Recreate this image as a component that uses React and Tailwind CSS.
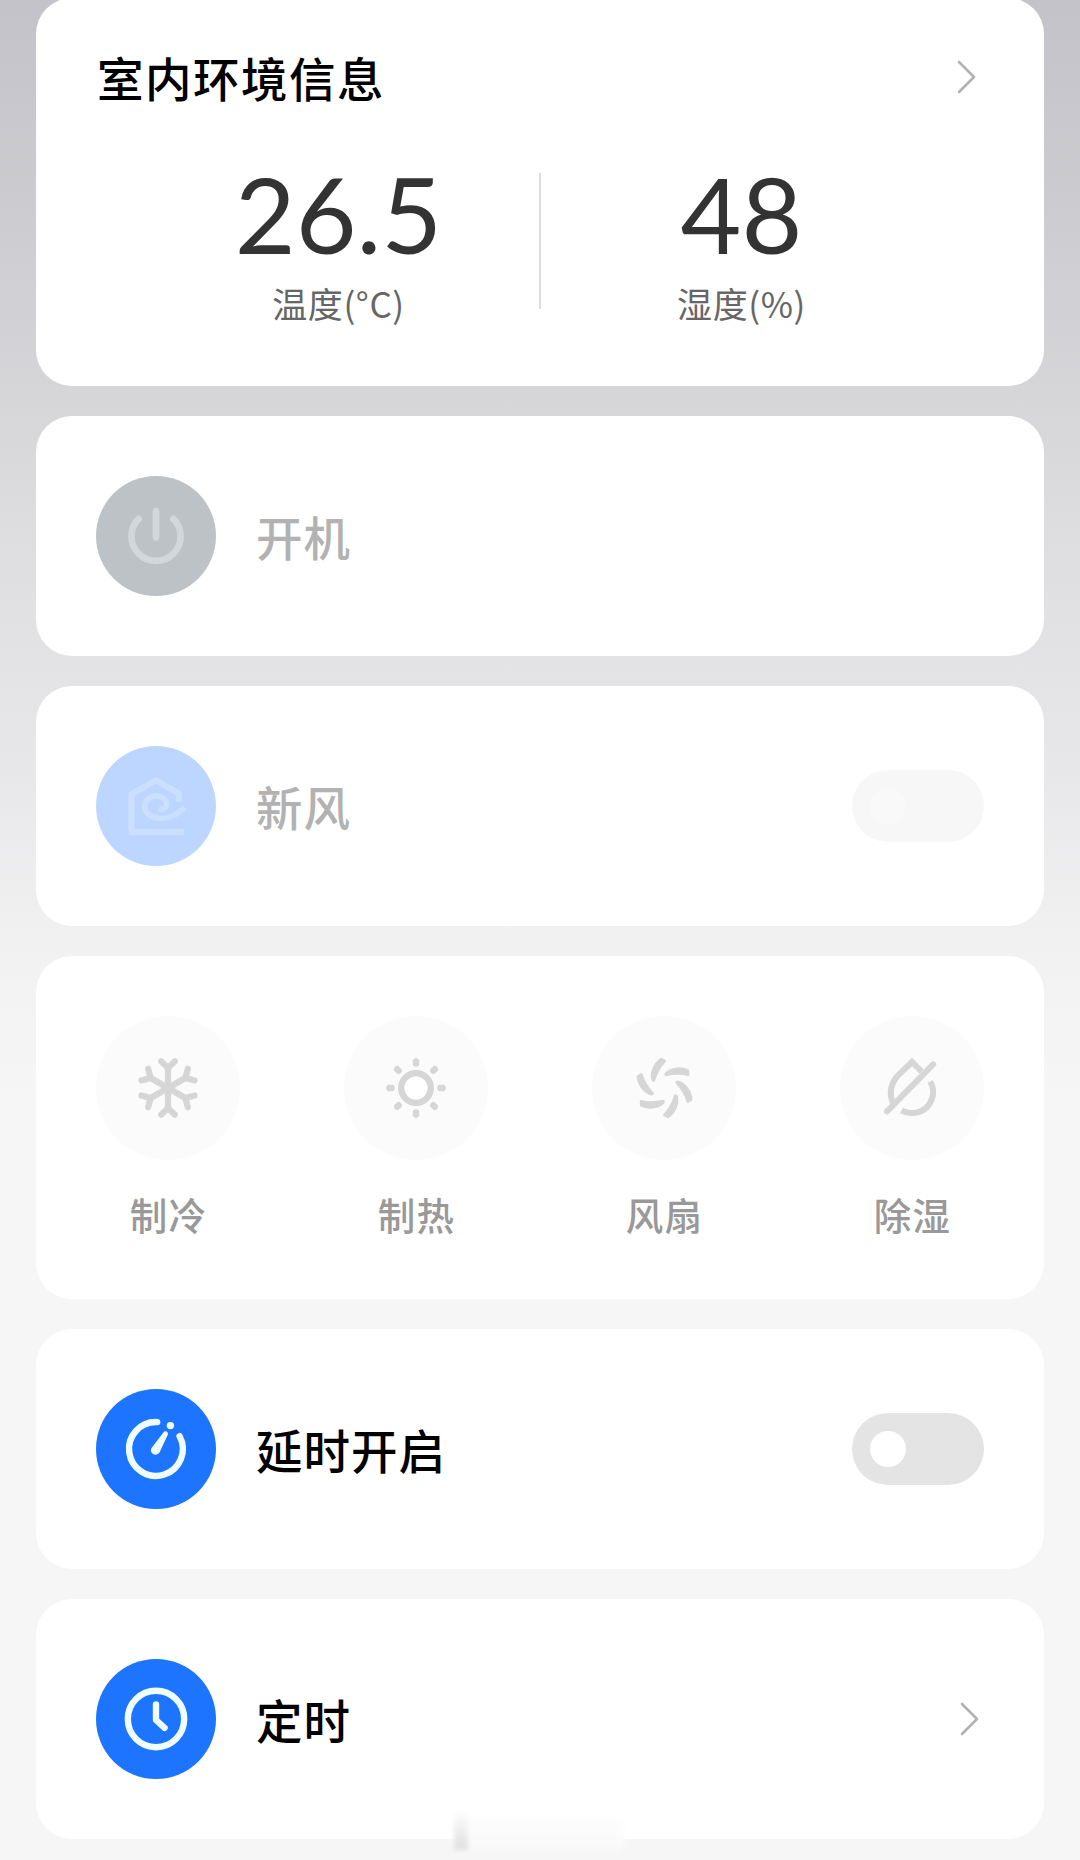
function Chevron({ className }) {
  return (
    <svg className={className} width="24" height="40" viewBox="0 0 24 40" fill="none" stroke="#b2b2b2" strokeWidth="2.6" strokeLinecap="round" strokeLinejoin="round">
      <path d="M4 5L19 20L4 35" />
    </svg>
  );
}

function PowerIcon() {
  return (
    <svg viewBox="0 0 120 120" className="size-full" fill="none" stroke="#d1d7da" strokeWidth="6.6" strokeLinecap="round">
      <path d="M42.8 42.7A24.6 24.6 0 1 0 77.2 42.7" />
      <path d="M60 35V61.5" />
    </svg>
  );
}

function FreshAirIcon() {
  return (
    <svg viewBox="0 0 120 120" className="size-full" fill="none" stroke="#cbdfff" strokeWidth="6.2" strokeLinejoin="round">
      <path d="M88 86.2H35.4V48.3L60 34.4L83 47.6V56" />
      <path d="M89 61.5C81 68 74 73 65 72.4C55 72 48.8 67 48.8 60.5C48.8 54 54 50 60 50C67 50 71 54 70.5 59C70 63 66 64.5 62.5 62.5" strokeWidth="5.6" />
    </svg>
  );
}

function DelayIcon() {
  return (
    <svg viewBox="0 0 120 120" className="size-full" fill="none" stroke="#f0fdff" strokeWidth="6.4" strokeLinecap="round">
      <path d="M61.2 33.1A26.9 26.9 0 1 0 83.6 47.2" />
      <circle cx="74.4" cy="36.6" r="3.7" fill="#f0fdff" stroke="none" />
      <path d="M67.6 43.2C68.8 41 73 42.8 71.8 45.8L63.6 63.2C60.5 68.5 52.8 64.2 55.4 59.2Z" fill="#f0fdff" stroke="none" />
    </svg>
  );
}

function ClockIcon() {
  return (
    <svg viewBox="0 0 120 120" className="size-full" fill="none" stroke="#f0fdff" strokeWidth="6.4" strokeLinecap="round" strokeLinejoin="round">
      <circle cx="60" cy="60" r="28.2" />
      <path d="M60 45.5V61L68.6 68.8" />
    </svg>
  );
}

const SIX = [0, 60, 120, 180, 240, 300];
const EIGHT = [0, 45, 90, 135, 180, 225, 270, 315];

function SnowIcon() {
  return (
    <svg viewBox="0 0 144 144" className="size-full" fill="none" stroke="#d6d6d6" strokeWidth="6.2" strokeLinecap="round" strokeLinejoin="round">
      {SIX.map((a) => (
        <path key={a} d="M72 72V52M65.2 45.2L72 52L78.8 45.2" transform={`rotate(${a} 72 72)`} />
      ))}
    </svg>
  );
}

function SunIcon() {
  return (
    <svg viewBox="0 0 144 144" className="size-full" fill="none" stroke="#d6d6d6" strokeWidth="6.4" strokeLinecap="round">
      <circle cx="72" cy="72" r="14.8" fill="#fff" />
      {EIGHT.map((a) => (
        <path key={a} d="M72 45.4V47.6" transform={`rotate(${a} 72 72)`} />
      ))}
    </svg>
  );
}

function FanIcon() {
  return (
    <svg viewBox="0 0 144 144" className="size-full" fill="#d6d6d6" stroke="#d6d6d6" strokeWidth="2.4" strokeLinejoin="round">
      {SIX.map((a) => (
        <path key={a} d="M73.6 57.8C78 52.6 88 50.8 96 54.6L96.2 58.8C89 57 81 57.4 73.8 59Z" transform={`rotate(${a} 72.6 72)`} />
      ))}
    </svg>
  );
}

function DryIcon() {
  return (
    <svg viewBox="0 0 144 144" className="size-full" fill="none" stroke="#d6d6d6" strokeWidth="6">
      <path d="M93.2 48.4L47 95.4" strokeLinecap="round" />
      <path d="M53 87C48.5 77 51 66 59 58.5L72 46L81.5 55.5" />
      <path d="M90.2 65.5C93.5 71 94 78 91.5 84C87 95.5 73.5 100.5 61.5 94.5" />
    </svg>
  );
}

function Toggle({ track, knob }) {
  return (
    <div className={`ml-auto flex h-[72px] w-[132px] items-center rounded-full px-[18px] ${track}`}>
      <div className={`size-9 rounded-full ${knob}`} />
    </div>
  );
}

function Row({ icon, circle, label, color, children }) {
  return (
    <section className="flex h-60 items-center rounded-[36px] bg-white px-[60px]">
      <div className={`size-[120px] rounded-full ${circle}`}>{icon}</div>
      <span className={`ml-10 text-[46.5px] leading-[46px] font-medium tracking-[1px] ${color}`}>{label}</span>
      {children}
    </section>
  );
}

function Reading({ value, unit, className }) {
  return (
    <div className={`flex flex-1 flex-col items-center ${className}`}>
      <span className="font-[Lato] text-[105px] leading-[102px] text-[#333]">{value}</span>
      <span className="mt-4 text-[35px] leading-[46px] tracking-[0.6px] text-[#666]">{unit}</span>
    </div>
  );
}

const MODES = [
  { label: "制冷", icon: <SnowIcon /> },
  { label: "制热", icon: <SunIcon /> },
  { label: "风扇", icon: <FanIcon /> },
  { label: "除湿", icon: <DryIcon /> },
];

export default function App() {
  return (
    <main className="relative h-[1860px] w-[1080px] overflow-hidden bg-[linear-gradient(180deg,#c4c3c9_0px,#cbcacf_180px,#d6d6d9_400px,#dfdfe1_560px,#e7e7e9_760px,#f1f1f2_940px,#f6f6f6_1100px,#f6f6f6_1860px)] px-9 font-['Noto_Sans_CJK_SC',sans-serif]">
      <div className="-mt-[2px] flex flex-col gap-[30px]">
        <section className="h-[388px] rounded-[36px] bg-white px-[60px] pt-[52px]">
          <div className="flex h-[54px] items-center justify-between">
            <h1 className="ml-px text-[46.5px] leading-[46px] font-medium tracking-[1.5px] text-black">室内环境信息</h1>
            <Chevron className="mr-[5px]" />
          </div>
          <div className="mt-[58px] flex">
            <Reading value="26.5" unit="温度(°C)" className="pl-[42px]" />
            <div className="mt-[11px] h-[136px] w-[2px] bg-[#dedede]" />
            <Reading value="48" unit="湿度(%)" className="pr-[42px]" />
          </div>
        </section>

        <Row icon={<PowerIcon />} circle="bg-[#bcc2c5]" label="开机" color="text-[#b2b2b2]" />

        <Row icon={<FreshAirIcon />} circle="bg-[#bdd6ff]" label="新风" color="text-[#b2b2b2]">
          <Toggle track="bg-[#f7f7f7]" knob="bg-[#f9f9f9]" />
        </Row>

        <section className="flex h-[343px] justify-between rounded-[36px] bg-white px-[60px] pt-[60px]">
          {MODES.map((m) => (
            <div key={m.label} className="flex w-36 flex-col items-center">
              <div className="size-36 rounded-full bg-[#fbfbfb]">{m.icon}</div>
              <span className="mt-[30px] ml-px text-[37.5px] leading-[48px] font-medium tracking-[1.2px] text-[#999]">{m.label}</span>
            </div>
          ))}
        </section>

        <Row icon={<DelayIcon />} circle="bg-[#1c74ff]" label="延时开启" color="text-black">
          <Toggle track="bg-[#e4e4e4]" knob="bg-white" />
        </Row>

        <Row icon={<ClockIcon />} circle="bg-[#1c74ff]" label="定时" color="text-black">
          <Chevron className="mr-[2px] ml-auto" />
        </Row>
      </div>

      <div className="absolute top-[1816px] left-[456px] h-[34px] w-[168px] bg-linear-to-b from-[#fefefe] to-[#f9f9f9] blur-[3px]" />
      <div className="absolute top-[1812px] left-[454px] h-[38px] w-[14px] bg-linear-to-b from-[#fdfdfd] to-[#e0e0e0] blur-[2px]" />
    </main>
  );
}
